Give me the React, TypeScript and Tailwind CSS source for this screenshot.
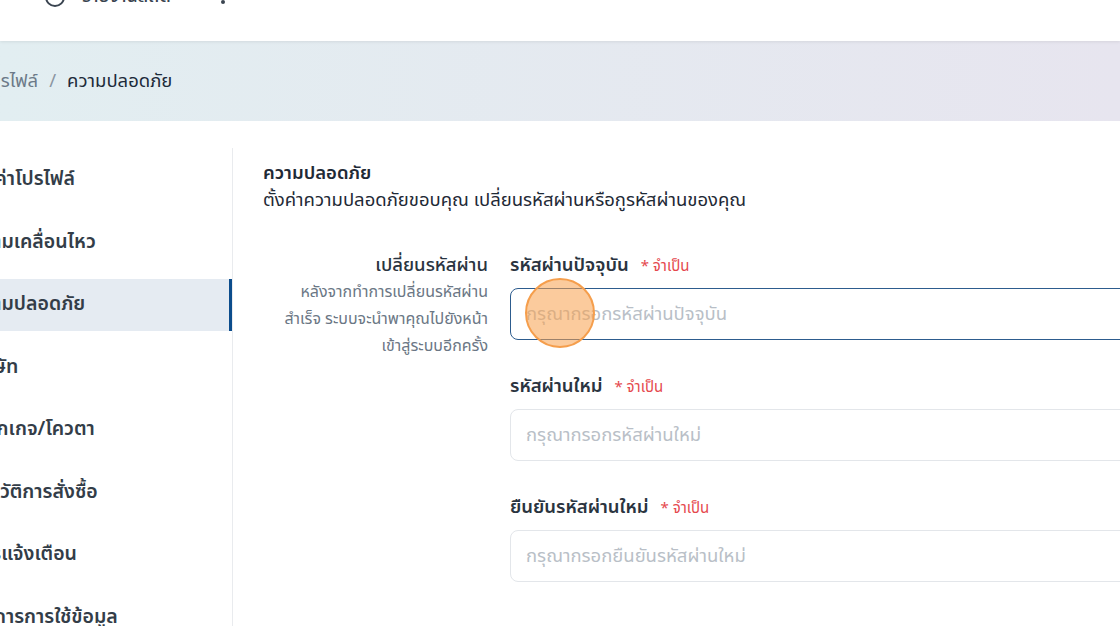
import { useState } from 'react';

const thai = "font-['Noto_Sans_Thai','Noto_Sans','DejaVu_Sans',sans-serif]";

const menu = [
  'ตั้งค่าโปรไฟล์',
  'ความเคลื่อนไหว',
  'ความปลอดภัย',
  'บริษัท',
  'แพ็กเกจ/โควตา',
  'ประวัติการสั่งซื้อ',
  'การแจ้งเตือน',
  'จัดการการใช้ข้อมูล',
];

interface FieldProps {
  label: string;
  placeholder: string;
  focused?: boolean;
}

function PasswordField({ label, placeholder, focused }: FieldProps) {
  const [value, setValue] = useState('');
  return (
    <div className="flex flex-col">
      <div className="flex h-[24px] items-baseline gap-3">
        <span className="text-[18.5px] font-semibold leading-[24px] text-[#2a3440]">{label}</span>
        <span className="text-[15px] leading-[24px] text-[#e5484d]">* จำเป็น</span>
      </div>
      <input
        type="password"
        value={value}
        onChange={(e) => setValue(e.target.value)}
        placeholder={placeholder}
        className={
          'mt-[11px] h-[52px] w-[720px] rounded-[8px] bg-white px-[15px] text-[18.5px] outline-none placeholder:text-[#b9bfc7] ' +
          (focused ? 'border-[1.5px] border-[#2d5c8e]' : 'border border-[#e3e6ea]')
        }
      />
    </div>
  );
}

export default function App() {
  return (
    <div className={`relative h-[626px] w-[1120px] overflow-hidden bg-white ${thai}`}>
      {/* top bar, scrolled mostly out of view */}
      <header className="relative z-10 flex h-[41px] flex-col bg-white shadow-[0_1px_3px_rgba(0,0,0,0.08)]">
        <div className="-mt-[15px] flex h-[24px] items-center">
          <span className="ml-[45px] block h-[20px] w-[20px] rounded-full border-2 border-[#3a4450]" />
          <span className="ml-[17px] text-[18px] font-medium leading-[24px] text-[#3a4450]">รายงานสถิติ</span>
          <span className="ml-[50px] mt-[10px] block h-[4px] w-[4px] rounded-full bg-[#3a4450]" />
        </div>
      </header>

      {/* breadcrumb */}
      <div className="flex h-[80px] items-center bg-linear-to-r from-[#e2eef1] to-[#e7e5ef]">
        <div className="-ml-[16px] flex items-center gap-[11px] text-[18.5px] leading-[26px]">
          <span className="text-[#6c7a88]">โปรไฟล์</span>
          <span className="text-[#8b96a2]">/</span>
          <span className="text-[#1d2b3a]">ความปลอดภัย</span>
        </div>
      </div>

      <div className="flex">
        {/* settings menu */}
        <nav className="mt-[27px] flex h-[520px] w-[233px] shrink-0 flex-col gap-[10.5px] border-r border-[#e9ebee] pt-[6px]">
          {menu.map((item) => {
            const active = item === 'ความปลอดภัย';
            return (
              <div
                key={item}
                className={
                  'flex h-[52px] shrink-0 items-center ' +
                  (active ? 'border-r-[3px] border-[#0b4c8c] bg-[#e5ebf2]' : '')
                }
              >
                <span className="-ml-[29px] whitespace-nowrap text-[19.5px] font-semibold text-[#333d48]">{item}</span>
              </div>
            );
          })}
        </nav>

        {/* security settings */}
        <main className="min-w-0 flex-1 pl-[30px] pt-[39px]">
          <h2 className="text-[18.5px] font-semibold leading-[26px] text-[#1f2a36]">ความปลอดภัย</h2>
          <p className="whitespace-nowrap text-[18.5px] leading-[28px] text-[#1f2a36]">
            ตั้งค่าความปลอดภัยขอบคุณ เปลี่ยนรหัสผ่านหรือกูรหัสผ่านของคุณ
          </p>

          <div className="mt-[39px] flex gap-[22px]">
            <div className="w-[225px] shrink-0 text-right">
              <div className="text-[18.5px] font-medium leading-[24px] text-[#2a3440]">เปลี่ยนรหัสผ่าน</div>
              <p className="mt-[2px] whitespace-nowrap text-[16px] leading-[27px] text-[#6b7785]">
                หลังจากทำการเปลี่ยนรหัสผ่าน
                <br />
                สำเร็จ ระบบจะนำพาคุณไปยังหน้า
                <br />
                เข้าสู่ระบบอีกครั้ง
              </p>
            </div>
            <div className="flex shrink-0 flex-col gap-[34px]">
              <PasswordField label="รหัสผ่านปัจจุบัน" placeholder="กรุณากรอกรหัสผ่านปัจจุบัน" focused />
              <PasswordField label="รหัสผ่านใหม่" placeholder="กรุณากรอกรหัสผ่านใหม่" />
              <PasswordField label="ยืนยันรหัสผ่านใหม่" placeholder="กรุณากรอกยืนยันรหัสผ่านใหม่" />
            </div>
          </div>
        </main>
      </div>

      {/* click highlight */}
      <span className="pointer-events-none absolute left-[525px] top-[278px] h-[70px] w-[70px] rounded-full border-2 border-[#f59e4c] bg-[#f8a04c]/55" />
    </div>
  );
}
